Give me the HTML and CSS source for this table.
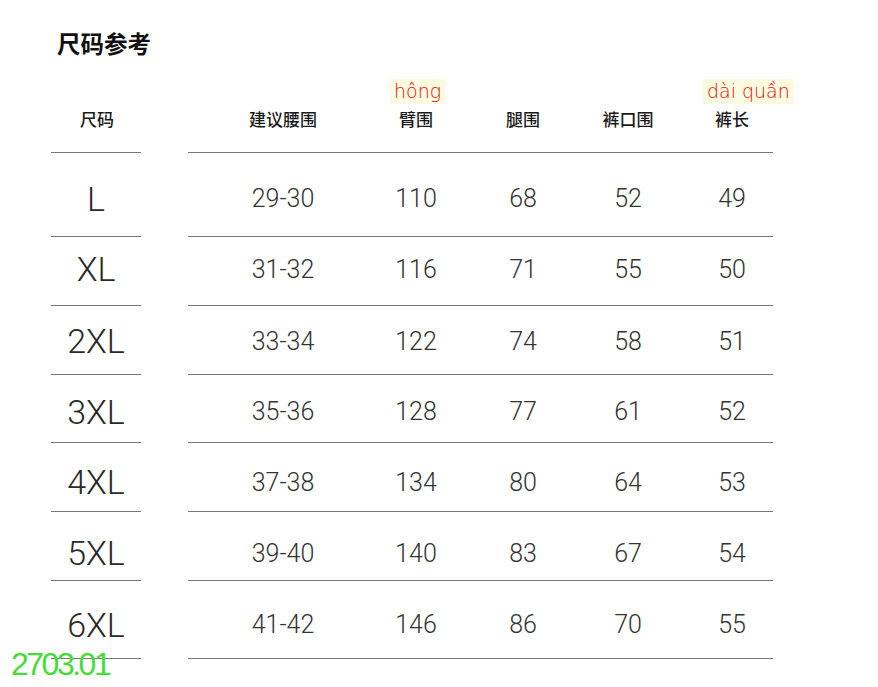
FILE: index.html
```html
<!DOCTYPE html>
<html lang="zh">
<head>
<meta charset="utf-8">
<title>尺码参考</title>
<link rel="stylesheet" href="styles.css">
</head>
<body>
<div class="page">
  <h1 class="title">尺码参考</h1>
  <div class="table">
    <div class="row head">
      <div class="size"><span class="lbl">尺码</span></div>
      <div class="gap"></div>
      <div class="cols">
        <div class="c c1"><span class="lbl">建议腰围</span></div>
        <div class="c c2"><span class="tag tag-a">hông</span><span class="lbl">臂围</span></div>
        <div class="c c3"><span class="lbl">腿围</span></div>
        <div class="c c4"><span class="lbl">裤口围</span></div>
        <div class="c c5"><span class="tag tag-b">dài quần</span><span class="lbl">裤长</span></div>
      </div>
    </div>
    <div class="row r1">
      <div class="size">L</div><div class="gap"></div>
      <div class="cols"><div class="c c1">29-30</div><div class="c c2">110</div><div class="c c3">68</div><div class="c c4">52</div><div class="c c5">49</div></div>
    </div>
    <div class="row r2">
      <div class="size">XL</div><div class="gap"></div>
      <div class="cols"><div class="c c1">31-32</div><div class="c c2">116</div><div class="c c3">71</div><div class="c c4">55</div><div class="c c5">50</div></div>
    </div>
    <div class="row r3">
      <div class="size">2XL</div><div class="gap"></div>
      <div class="cols"><div class="c c1">33-34</div><div class="c c2">122</div><div class="c c3">74</div><div class="c c4">58</div><div class="c c5">51</div></div>
    </div>
    <div class="row r4">
      <div class="size">3XL</div><div class="gap"></div>
      <div class="cols"><div class="c c1">35-36</div><div class="c c2">128</div><div class="c c3">77</div><div class="c c4">61</div><div class="c c5">52</div></div>
    </div>
    <div class="row r5">
      <div class="size">4XL</div><div class="gap"></div>
      <div class="cols"><div class="c c1">37-38</div><div class="c c2">134</div><div class="c c3">80</div><div class="c c4">64</div><div class="c c5">53</div></div>
    </div>
    <div class="row r6">
      <div class="size">5XL</div><div class="gap"></div>
      <div class="cols"><div class="c c1">39-40</div><div class="c c2">140</div><div class="c c3">83</div><div class="c c4">67</div><div class="c c5">54</div></div>
    </div>
    <div class="row r7">
      <div class="size">6XL</div><div class="gap"></div>
      <div class="cols"><div class="c c1">41-42</div><div class="c c2">146</div><div class="c c3">86</div><div class="c c4">70</div><div class="c c5">55</div></div>
    </div>
  </div>
  <div class="code">2703.01</div>
</div>
</body>
</html>
```
FILE: styles.css
```css
html, body {
  margin: 0;
  padding: 0;
  background: #ffffff;
}
.page {
  position: relative;
  width: 878px;
  height: 687px;
  overflow: hidden;
  font-family: Roboto, "Liberation Sans", "Noto Sans CJK SC", sans-serif;
  color: #333;
}
.title {
  margin: 29px 0 0 57px;
  font-family: "Noto Sans CJK SC", sans-serif;
  font-size: 23.5px;
  line-height: 28px;
  font-weight: 700;
  color: #111;
}
.table {
  margin-left: 51px;
  width: 722px;
}
.row {
  display: flex;
  box-sizing: border-box;
}
.size {
  width: 90px;
  box-sizing: border-box;
  border-bottom: 1px solid #777;
  display: flex;
  align-items: center;
  justify-content: center;
  font-size: 34px;
  font-weight: 300;
  color: #2a2a2a;
}
.gap {
  width: 47px;
}
.cols {
  width: 585px;
  display: flex;
  box-sizing: border-box;
  border-bottom: 1px solid #777;
}
.c {
  display: flex;
  align-items: center;
  justify-content: center;
  box-sizing: border-box;
  font-size: 25px;
  font-weight: 300;
  color: #333;
}
.c1 { width: 190px; }
.c2 { width: 76px; }
.c3 { width: 138px; }
.c4 { width: 72px; }
.c5 { width: 109px; padding-left: 27px; }

.head { height: 96px; }
.head .size, .head .c {
  align-items: flex-end;
  padding-bottom: 21px;
  position: relative;
}
.lbl {
  font-family: "Noto Sans CJK SC", sans-serif;
  font-size: 17px;
  line-height: 24px;
  font-weight: 500;
  color: #1a1a1a;
  white-space: nowrap;
}
.head .size .lbl { padding-left: 2px; }
.tag {
  position: absolute;
  top: 22px;
  font-family: "DejaVu Sans", sans-serif;
  font-size: 19px;
  line-height: 25px;
  color: #e00c06;
  background: #fdfbe0;
  padding: 0 4px;
  white-space: nowrap;
}
.tag-a { left: 12px; }
.tag-b { left: 39px; }

.r1 { height: 84px; }
.r2 { height: 69px; }
.r3 { height: 69px; }
.r4 { height: 68px; }
.r5 { height: 69px; }
.r6 { height: 69px; }
.r7 { height: 78px; }
.r1 .size, .r1 .c { padding-top: 8px; }
.r2 .size, .r2 .c { padding-bottom: 4px; }
.r3 .size, .r3 .c { padding-top: 2px; }
.r4 .size, .r4 .c { padding-top: 6px; }
.r5 .size, .r5 .c { padding-top: 10px; }
.r6 .size, .r6 .c { padding-top: 14px; }
.r7 .size, .r7 .c { padding-top: 10px; }

.code {
  position: absolute;
  left: 11px;
  top: 648px;
  font-family: "Liberation Sans", Arial, sans-serif;
  font-size: 32px;
  line-height: 32px;
  letter-spacing: -2.5px;
  color: #45dc38;
}
```
